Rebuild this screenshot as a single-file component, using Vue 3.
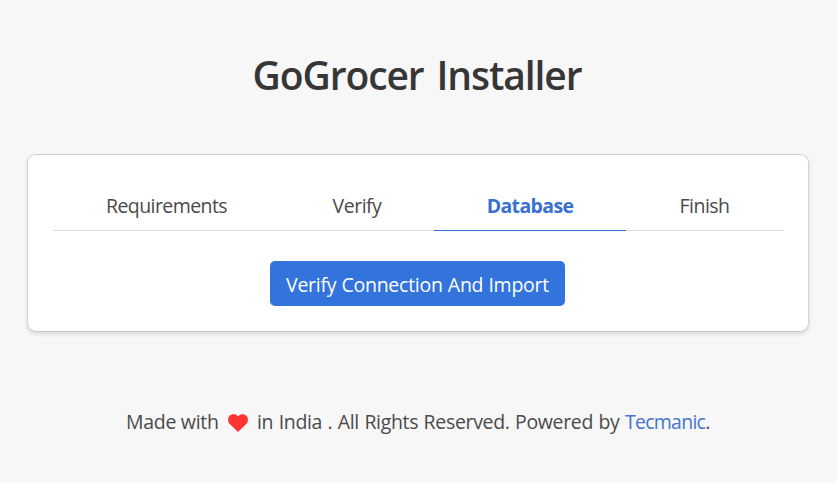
<script setup>
const steps = [
  { name: 'Requirements', key: 'requirements' },
  { name: 'Verify', key: 'verify' },
  { name: 'Database', key: 'database', active: true },
  { name: 'Finish', key: 'finish' },
]
</script>

<template>
  <main class="page">
    <h1 class="title"><span>GoGrocer Installer</span></h1>
    <section class="box">
      <ul class="tabs">
        <li v-for="step in steps" :key="step.key" :class="['tab', step.key, { active: step.active }]">
          <span>{{ step.name }}</span>
        </li>
      </ul>
      <button class="button" type="button"><span>Verify Connection And Import</span></button>
    </section>
    <footer class="footer">
      <span class="made">Made with</span>
      <svg class="heart" viewBox="0 0 20 18" aria-hidden="true">
        <path d="M10 18 1.5 9.8C-.3 7.6-.4 4 1.4 1.9 3.6-.4 7.8-.5 10 2.2 12.2-.5 16.4-.4 18.6 1.9c1.8 2.1 1.7 5.7-.1 7.9Z" />
      </svg>
      <span class="rights">in India . All Rights Reserved. Powered by</span>
      <span class="brand"><a>Tecmanic</a>.</span>
    </footer>
  </main>
</template>

<style>
body {
  background: #f7f7f7;
}
</style>

<style scoped>
.page {
  box-sizing: border-box;
  height: 483px;
  padding: 48px 28px 0 27px;
  overflow: hidden;
  background: #f7f7f7;
  color: #4a4a4a;
  font-family: "Open Sans", "Noto Sans", sans-serif;
  font-size: 19.5px;
  line-height: 30px;
  white-space: nowrap;
}
.title {
  margin: 0;
  height: 106px;
  padding-right: 2px;
  color: #363636;
  font-size: 39px;
  font-weight: 600;
  line-height: 54px;
  text-align: center;
  letter-spacing: -1.1px;
  word-spacing: 4px;
}
.box {
  box-sizing: border-box;
  height: 178px;
  padding: 25px;
  background: #fff;
  border: 1px solid #d3d3d3;
  border-bottom-color: #c8c8c8;
  border-radius: 9px;
  box-shadow: 0 2px 4px rgba(10, 10, 10, 0.12);
}
.tabs {
  display: grid;
  grid-template-columns: 227px 154px 192px 157px;
  margin: 0 0 30px;
  padding: 0;
  list-style: none;
}
.tab {
  box-sizing: border-box;
  height: 51px;
  padding-top: 11px;
  border-bottom: 1px solid #dbdbdb;
  text-align: center;
  letter-spacing: -0.5px;
}
.tab.requirements {
  letter-spacing: -0.58px;
}
.tab.active {
  border-color: #3273dc;
  color: #3a70d0;
  font-weight: 700;
  letter-spacing: -0.65px;
}
.button {
  display: block;
  width: 295px;
  height: 45px;
  margin-left: 217px;
  padding: 3px 0 0;
  border: 0;
  border-radius: 5px;
  background: #3273dc;
  color: #fff;
  font: inherit;
  letter-spacing: -0.25px;
  word-spacing: 0.3px;
}
.footer {
  display: grid;
  grid-template-columns: 102px 29px 368px auto;
  align-items: center;
  margin-top: 75px;
  padding-left: 99px;
  letter-spacing: -0.3px;
}
.heart {
  width: 20px;
  height: 18px;
  margin-top: 2px;
  fill: #ff3431;
}
.rights {
  letter-spacing: -0.33px;
  word-spacing: 0.7px;
}
.brand {
  letter-spacing: -0.75px;
}
.brand a {
  color: #4774cc;
}
</style>
